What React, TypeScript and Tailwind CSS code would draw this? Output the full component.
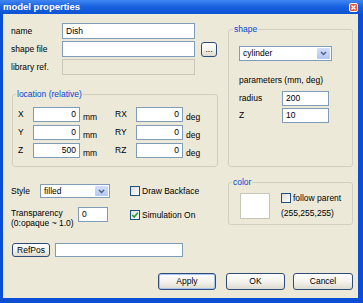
import React from "react";

function Box({
  className = "",
  children,
  disabled = false,
  right = false,
}: {
  className?: string;
  children?: React.ReactNode;
  disabled?: boolean;
  right?: boolean;
}) {
  return (
    <div
      className={
        "flex items-center shrink-0 border " +
        (disabled ? "border-[#C9C7BA] bg-[#ECE9D8] " : "border-[#7F9DB9] bg-white ") +
        (right ? "justify-end pr-[3px] " : "pl-[3px] ") +
        className
      }
    >
      {children}
    </div>
  );
}

function Combo({ className = "", value }: { className?: string; value: string }) {
  return (
    <div className={"flex shrink-0 border border-[#7F9DB9] bg-white " + className}>
      <div className="flex-1 flex items-center pl-[3px]">{value}</div>
      <div className="w-[13px] m-[1px] rounded-[1px] bg-gradient-to-b from-[#D2DEFA] to-[#B2C7F5] flex items-center justify-center">
        <svg width="7" height="5" viewBox="0 0 7 5">
          <path d="M1 1 L3.5 3.5 L6 1" fill="none" stroke="#4D6185" strokeWidth="1.5" />
        </svg>
      </div>
    </div>
  );
}

function Check({ checked = false }: { checked?: boolean }) {
  return (
    <div className="w-[10px] h-[10px] shrink-0 border border-[#1C5180] bg-gradient-to-br from-[#DCDCD7] to-white flex items-center justify-center">
      {checked && (
        <svg width="8" height="8" viewBox="0 0 8 8">
          <path d="M1.2 4 L3.2 6 L6.8 1.8" fill="none" stroke="#21A121" strokeWidth="1.6" />
        </svg>
      )}
    </div>
  );
}

function Btn({ className = "", children, def = false }: { className?: string; children: React.ReactNode; def?: boolean }) {
  return (
    <div
      className={
        "flex items-center justify-center shrink-0 border border-[#2F4C78] rounded-[3px] bg-gradient-to-b from-white via-[#F4F3EE] to-[#DEDBCF] " +
        (def ? "shadow-[inset_0_0_0_1px_#A9C5F3] " : "") +
        className
      }
    >
      {children}
    </div>
  );
}

export default function App() {
  return (
    <div className="w-[363px] h-[303px] flex flex-col bg-[#0B4DD4] font-['Liberation_Sans',Arial,sans-serif] text-[8.5px] text-black overflow-hidden">
      <div className="h-[14px] shrink-0 flex items-center justify-between pl-[3px] pr-[5px] bg-gradient-to-b from-[#3F86F2] via-[#1760DF] to-[#0D54D5]">
        <span className="text-white font-bold text-[9.5px] leading-none">model properties</span>
        <div className="w-[9px] h-[9px] rounded-[2px] border border-white bg-[#E0583A] flex items-center justify-center">
          <svg width="5" height="5" viewBox="0 0 5 5">
            <path d="M0.5 0.5 L4.5 4.5 M4.5 0.5 L0.5 4.5" stroke="white" strokeWidth="1.2" />
          </svg>
        </div>
      </div>

      <div className="flex-1 ml-[3px] mr-[5px] mb-[5px] bg-[#ECE9D8] flex flex-col pl-[8px] pr-[5px] pt-[9px]">
        {/* top section */}
        <div className="flex gap-[10px]">
          <div className="w-[207px] flex flex-col">
            <div className="flex items-center h-[16px]">
              <span className="w-[51px]">name</span>
              <Box className="w-[133px] h-[16px]">Dish</Box>
            </div>
            <div className="flex items-center h-[16px] mt-[2px]">
              <span className="w-[51px]">shape file</span>
              <Box className="w-[133px] h-[16px]" />
              <Btn className="ml-[6px] w-[16px] h-[15px] items-end pb-[2px] leading-none">...</Btn>
            </div>
            <div className="flex items-center h-[16px] mt-[2px]">
              <span className="w-[51px]">library ref.</span>
              <Box disabled className="w-[133px] h-[16px]" />
            </div>

            <fieldset className="mt-[14px] ml-[1px] border border-[#D0D0BF] rounded-[3px] pl-[5px] pr-[2px] pt-[8px] pb-[8px]">
              <legend className="-ml-[2px] px-[1px] leading-[10px] text-[#0046D5]">location (relative)</legend>
              <div className="flex flex-col gap-[3px]">
                {[
                  ["X", "0", "RX", "0"],
                  ["Y", "0", "RY", "0"],
                  ["Z", "500", "RZ", "0"],
                ].map(([a, av, b, bv]) => (
                  <div key={a} className="flex items-center h-[15px]">
                    <span className="w-[15px]">{a}</span>
                    <Box right className="w-[47px] h-[15px]">{av}</Box>
                    <span className="w-[35px] pl-[3px] self-end leading-[10px]">mm</span>
                    <span className="w-[21px]">{b}</span>
                    <Box right className="w-[47px] h-[15px]">{bv}</Box>
                    <span className="pl-[3px] self-end leading-[10px]">deg</span>
                  </div>
                ))}
              </div>
            </fieldset>
          </div>

          <fieldset className="flex-1 mt-[1px] border border-[#D0D0BF] rounded-[3px] pl-[10px] pt-[12px]">
            <legend className="-ml-[6px] px-[1px] leading-[10px] text-[#0046D5]">shape</legend>
            <Combo className="w-[93px] h-[15px]" value="cylinder" />
            <div className="mt-[14px] leading-[10px]">parameters (mm, deg)</div>
            <div className="mt-[6px] flex items-center h-[15px]">
              <span className="w-[43px]">radius</span>
              <Box className="w-[47px] h-[15px]">200</Box>
            </div>
            <div className="mt-[2px] flex items-center h-[15px]">
              <span className="w-[43px]">Z</span>
              <Box className="w-[47px] h-[15px]">10</Box>
            </div>
          </fieldset>
        </div>

        {/* second section */}
        <div className="flex gap-[10px] items-start">
          <div className="w-[207px] flex flex-col mt-[17px]">
            <div className="flex items-center h-[14px]">
              <span className="w-[29px]">Style</span>
              <Combo className="w-[70px] h-[14px]" value="filled" />
              <div className="ml-[20px] flex items-center gap-[2px]">
                <Check />
                <span>Draw Backface</span>
              </div>
            </div>
            <div className="mt-[9px] flex items-start">
              <div className="w-[67px] pt-[1px] leading-[10px]">
                <div>Transparency</div>
                <div>(0:opaque ~ 1.0)</div>
              </div>
              <Box className="w-[30px] h-[15px]">0</Box>
              <div className="ml-[22px] mt-[2px] flex items-center gap-[2px]">
                <Check checked />
                <span>Simulation On</span>
              </div>
            </div>
          </div>

          <fieldset className="flex-1 mt-[10px] border border-[#D0D0BF] rounded-[3px] pl-[11px] pt-[6px] pb-[5px]">
            <legend className="-ml-[8px] px-[1px] leading-[10px] text-[#0046D5]">color</legend>
            <div className="flex items-start">
              <div className="w-[30px] h-[26px] border border-[#C8C6B8] bg-white" />
              <div className="ml-[11px] flex flex-col">
                <div className="flex items-center h-[10px] gap-[2px]">
                  <Check />
                  <span>follow parent</span>
                </div>
                <div className="mt-[5px] leading-[10px]">(255,255,255)</div>
              </div>
            </div>
          </fieldset>
        </div>

        {/* RefPos row */}
        <div className="mt-[15px] flex items-center h-[14px]">
          <Btn className="ml-[1px] w-[38px] h-[14px]">RefPos</Btn>
          <Box className="ml-[5px] w-[128px] h-[14px]" />
        </div>

        {/* buttons */}
        <div className="mt-[16px] flex justify-end h-[17px]">
          <Btn def className="w-[58px] h-[17px]">Apply</Btn>
          <Btn className="ml-[10px] w-[59px] h-[17px]">OK</Btn>
          <Btn className="ml-[8px] w-[60px] h-[17px]">Cancel</Btn>
        </div>
      </div>
    </div>
  );
}
